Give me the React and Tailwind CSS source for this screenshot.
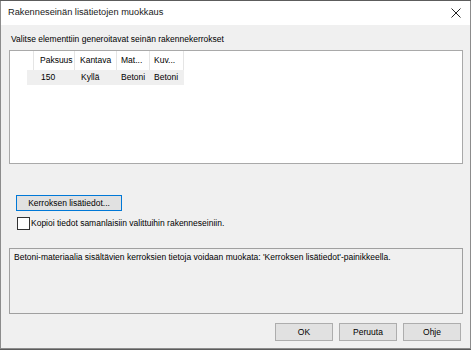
export default function App() {
  const font = { fontFamily: '"Liberation Sans", Arial, sans-serif' };
  return (
    <div className="w-[471px] h-[350px] bg-[#5c5c5c] pt-px overflow-hidden" style={font}>
      <div className="w-[471px] h-[348px] border border-t-0 border-[#8c8c8c] bg-[#f0f0f0] flex flex-col">
        <div className="h-[24px] bg-white flex items-center justify-between pl-[7px] pr-[8px] shrink-0">
          <span className="text-[9.25px] text-[#1a1a1a] leading-none">Rakenneseinän lisätietojen muokkaus</span>
          <svg width="10" height="10" viewBox="0 0 10 10" className="mr-[1px]">
            <path d="M0.5 0.5 L9.5 9.5 M9.5 0.5 L0.5 9.5" stroke="#222" strokeWidth="1" />
          </svg>
        </div>
        <div className="flex flex-col pl-[8px] pr-[7px] text-[8.5px] text-black leading-[11px]">
          <div className="mt-[9px] pl-[2px] h-[11px]">Valitse elementtiin generoitavat seinän rakennekerrokset</div>
          <div className="mt-[5px] h-[114px] w-[454px] bg-white border border-[#a9a9a9] flex flex-col">
            <div className="flex h-[19px] shrink-0">
              <div className="w-[24px] border-r border-[#e5e5e5]" />
              <div className="w-[41px] border-r border-[#e5e5e5] pl-[6px] flex items-center">Paksuus</div>
              <div className="w-[42px] border-r border-[#e5e5e5] pl-[5px] flex items-center">Kantava</div>
              <div className="w-[33px] border-r border-[#e5e5e5] pl-[4px] flex items-center">Mat...</div>
              <div className="w-[34px] border-r border-[#e5e5e5] pl-[4px] flex items-center">Kuv...</div>
            </div>
            <div className="flex h-[15px] items-center">
              <div className="w-[17px]" />
              <div className="flex h-[15px] items-center bg-[#efefef]">
                <div className="w-[48px] pl-[14px]">150</div>
                <div className="w-[42px] pl-[6px]">Kyllä</div>
                <div className="w-[33px] pl-[4px]">Betoni</div>
                <div className="w-[34px] pl-[4px]">Betoni</div>
              </div>
            </div>
          </div>
          <div className="mt-[31px] ml-[7px] w-[106px] h-[16px] bg-[#e1e1e1] border border-[#0078d7] flex items-center justify-center">
            Kerroksen lisätiedot...
          </div>
          <div className="mt-[6px] ml-[8px] flex items-center h-[13px]">
            <div className="w-[13px] h-[13px] bg-white border border-[#333]" />
            <span className="ml-[1px]">Kopioi tiedot samanlaisiin valittuihin rakenneseiniin.</span>
          </div>
          <div className="mt-[18px] w-[454px] h-[66px] border border-[#a0a0a0] bg-[#f0f0f0] pl-[4px] pt-[3px]">
            Betoni-materiaalia sisältävien kerroksien tietoja voidaan muokata: 'Kerroksen lisätiedot'-painikkeella.
          </div>
          <div className="mt-[9px] flex justify-end gap-[6px] pr-[2px]">
            <div className="w-[58px] h-[18px] bg-[#e1e1e1] border border-[#adadad] flex items-center justify-center">OK</div>
            <div className="w-[58px] h-[18px] bg-[#e1e1e1] border border-[#adadad] flex items-center justify-center">Peruuta</div>
            <div className="w-[58px] h-[18px] bg-[#e1e1e1] border border-[#adadad] flex items-center justify-center">Ohje</div>
          </div>
        </div>
      </div>
    </div>
  );
}
